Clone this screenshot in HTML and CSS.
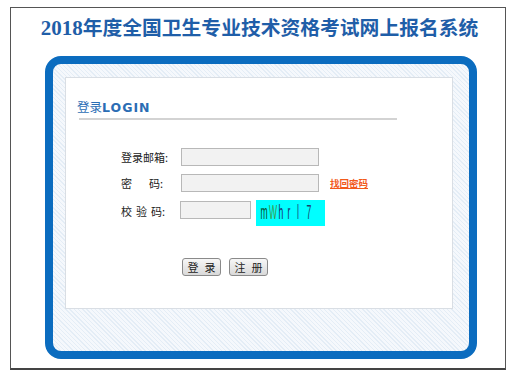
FILE: index.html
```html
<!DOCTYPE html>
<html lang="zh-CN">
<head>
<meta charset="utf-8">
<title>2018年度全国卫生专业技术资格考试网上报名系统</title>
<link rel="stylesheet" href="styles.css">
</head>
<body>
<div class="frame">
  <h1 class="title"><span class="num">2018</span>年度全国卫生专业技术资格考试网上报名系统</h1>
  <div class="box">
    <div class="panel">
      <div class="heading"><span class="cn">登录</span><span class="en">LOGIN</span></div>
      <div class="rule"></div>
      <form class="form">
        <div class="row">
          <label class="label">登录邮箱:</label>
          <input class="field wide" type="text">
        </div>
        <div class="row">
          <label class="label">密<span class="gap-lg"></span>码:</label>
          <input class="field wide" type="password">
          <a class="forgot" href="#">找回密码</a>
        </div>
        <div class="row row-code">
          <label class="label">校<span class="gap-sm"></span>验<span class="gap-sm"></span>码:</label>
          <input class="field short" type="text">
          <div class="captcha">
            <span class="ch c1" style="left:7.5px">m</span>
            <span class="ch c2" style="left:16.5px">W</span>
            <span class="ch c3" style="left:25px">h</span>
            <span class="ch c4" style="left:33px">r</span>
            <span class="ch c5" style="left:42px">l</span>
            <span class="ch c6" style="left:52.5px">7</span>
          </div>
        </div>
        <div class="buttons">
          <button class="btn" type="button">登<span class="bgap"></span>录</button>
          <button class="btn" type="button">注<span class="bgap"></span>册</button>
        </div>
      </form>
    </div>
  </div>
</div>
</body>
</html>
```

FILE: styles.css
```css
* { box-sizing: border-box; }
body {
  margin: 0;
  background: #fff;
  font-family: "Noto Sans CJK SC", "Liberation Sans", sans-serif;
}
.frame {
  margin: 7px 0 0 10px;
  width: 496px;
  height: 363px;
  border: 1px solid #555;
  border-bottom: 2px solid #444;
}
.title {
  margin: 0;
  padding-left: 3px;
  height: 38px;
  line-height: 38px;
  text-align: center;
  font-size: 19.8px;
  font-weight: bold;
  color: #1f5ea8;
  font-family: "Noto Sans CJK SC", sans-serif;
}
.title .num {
  font-family: "Liberation Serif", serif;
  font-size: 21px;
}
.box {
  margin: 10px 0 0 34px;
  width: 432px;
  height: 303px;
  border: 8px solid #0b6cbf;
  border-radius: 16px;
  padding: 13px 16px 42px 12px;
  background: repeating-linear-gradient(45deg, #f5f8fc 0 2px, #e4edf6 2px 3px);
}
.panel {
  height: 232px;
  background: #fff;
  border: 1px solid #d9dee4;
}
.heading {
  margin-top: 17px;
  padding-left: 11px;
  height: 20px;
  line-height: 20px;
  color: #2b6db4;
  font-weight: bold;
}
.heading .cn { font-size: 12.5px; font-weight: normal; }
.heading .en {
  font-family: "DejaVu Sans", sans-serif;
  font-size: 12.5px;
  letter-spacing: 1px;
}
.rule {
  margin: 3px 0 0 13px;
  width: 318px;
  height: 2px;
  background: #d3d3d3;
}
.form {
  margin: 28px 0 0 55px;
  font-size: 11px;
  color: #222;
}
.row {
  display: flex;
  align-items: center;
  height: 18px;
  margin-bottom: 8px;
}
.row-code {
  height: 26px;
  align-items: flex-start;
}
.label {
  width: 60px;
  flex: none;
  line-height: 18px;
  white-space: nowrap;
}
.row-code .label { line-height: 22px; }
.gap-lg { display: inline-block; width: 17px; }
.gap-sm { display: inline-block; width: 4px; }
.field {
  height: 18px;
  border: 1px solid #b8b8b8;
  background: #f2f2f2;
  padding: 0 3px;
  font-size: 11px;
}
.wide { width: 138px; }
.short { width: 71px; margin-left: -1px; margin-top: 1px; }
.forgot {
  margin-left: 11px;
  color: #f25a1c;
  font-size: 9.5px;
  font-weight: bold;
  text-decoration: underline;
}
.captcha {
  position: relative;
  margin-left: 5px;
  width: 69px;
  height: 26px;
  background: #00ffff;
  font-family: "Liberation Sans", sans-serif;
  font-size: 11px;
}
.ch {
  position: absolute;
  top: 6px;
  line-height: 13px;
  transform: translateX(-50%) scale(0.78, 1.85);
}
.c1 { color: #0b4a2a; }
.c2 { color: #3f9a4a; }
.c3 { color: #1b2d6a; }
.c4 { color: #1d3270; }
.c5 { color: #1a3c7c; }
.c6 { color: #1b3d6c; }
.buttons {
  display: flex;
  gap: 8px;
  margin: 32px 0 0 61px;
}
.btn {
  width: 39px;
  height: 18px;
  padding: 0;
  border: 1px solid #8a8a8a;
  border-radius: 3px;
  background: linear-gradient(#f7f7f7, #d9d9d9);
  font-family: "Noto Sans CJK SC", sans-serif;
  font-size: 11px;
  line-height: 16px;
  color: #222;
}
.bgap { display: inline-block; width: 6px; }
```
